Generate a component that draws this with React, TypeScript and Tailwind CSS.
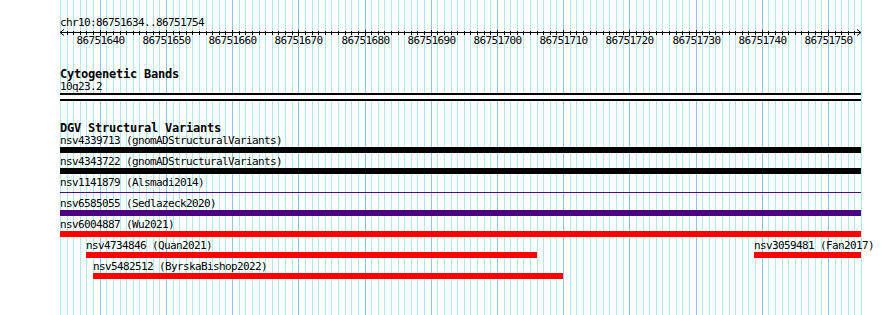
const START = 86751634;
const END = 86751754;
const LEFT = 60;
const PX = 801 / 121;

const xOf = (bp: number) => LEFT + (bp - START) * PX;

type Feature = { name: string; start: number; end: number; color: string; thin?: boolean };

// rows of the DGV track, each row may hold more than one feature
const rows: Feature[][] = [
  [{ name: 'nsv4339713 (gnomADStructuralVariants)', start: START, end: END + 1, color: '#000000' }],
  [{ name: 'nsv4343722 (gnomADStructuralVariants)', start: START, end: END + 1, color: '#000000' }],
  [{ name: 'nsv1141879 (Alsmadi2014)', start: START, end: END + 1, color: '#4b0082', thin: true }],
  [{ name: 'nsv6585055 (Sedlazeck2020)', start: START, end: END + 1, color: '#4b0082' }],
  [{ name: 'nsv6004887 (Wu2021)', start: START, end: END + 1, color: '#ff0000' }],
  [
    { name: 'nsv4734846 (Quan2021)', start: 86751638, end: 86751706, color: '#ff0000' },
    { name: 'nsv3059481 (Fan2017)', start: 86751738.85, end: END + 1, color: '#ff0000' },
  ],
  [{ name: 'nsv5482512 (ByrskaBishop2022)', start: 86751639, end: 86751710, color: '#ff0000' }],
];

const bases = Array.from({ length: END - START + 2 }, (_, i) => START + i);
const majors = bases.filter((b) => b % 10 === 0 && b <= END);

function Grid() {
  return (
    <svg className="absolute inset-0" width={890} height={315} shapeRendering="crispEdges">
      {bases.map((b) => (
        <line
          key={b}
          x1={Math.round(xOf(b)) + 0.5}
          x2={Math.round(xOf(b)) + 0.5}
          y1={0}
          y2={315}
          stroke={b % 10 === 0 ? '#8cc6ec' : '#b0eaf0'}
          strokeWidth={1}
        />
      ))}
    </svg>
  );
}

function Ruler() {
  const y = 3.5;
  const right = Math.round(xOf(END + 1));
  return (
    <svg className="block overflow-visible" width={890} height={5} shapeRendering="crispEdges">
      <line x1={LEFT} x2={right} y1={y} y2={y} stroke="#000" />
      <path d={`M${LEFT + 4} ${y - 3} L${LEFT} ${y} L${LEFT + 4} ${y + 3}`} stroke="#000" fill="none" shapeRendering="auto" />
      <path d={`M${right - 4} ${y - 3} L${right} ${y} L${right - 4} ${y + 3}`} stroke="#000" fill="none" shapeRendering="auto" />
      {bases.slice(1, -1).map((b) => {
        const x = Math.round(xOf(b)) + 0.5;
        const major = b % 10 === 0;
        return <line key={b} x1={x} x2={x} y1={major ? y - 3 : y - 2} y2={major ? y + 3 : y + 2} stroke="#000" />;
      })}
    </svg>
  );
}

export default function App() {
  return (
    <div className="relative h-[315px] w-[890px] overflow-hidden bg-white text-black [font-family:'DejaVu_Sans_Mono',monospace]">
      <Grid />
      <div className="relative pt-[16px] text-[11px] leading-[13px] tracking-[-0.62px]">
        {/* Overview header */}
        <div className="h-[13px] pl-[60px]">chr10:86751634..86751754</div>
        <Ruler />
        <div className="relative h-[13px]">
          {majors.map((b) => (
            <span key={b} className="absolute top-0 -translate-x-1/2" style={{ left: Math.round(xOf(b)) + 0.5 }}>
              {b}
            </span>
          ))}
        </div>

        {/* Cytogenetic bands */}
        <div className="mt-[21px] h-[12px] pl-[60px] text-[12px] font-bold tracking-[-0.22px]">Cytogenetic Bands</div>
        <div className="h-[13px] pl-[60px]">10q23.2</div>
        <div className="ml-[60px] h-[8px] w-[801px] border-y-2 border-black bg-white" />

        {/* DGV */}
        <div className="mt-[21px] h-[12px] pl-[60px] text-[12px] font-bold tracking-[-0.22px]">DGV Structural Variants</div>
        {rows.map((row, i) => (
          <div key={i} className="relative h-[21px]">
            {row.map((f) => {
              const left = Math.round(xOf(f.start));
              const width = Math.min(Math.round(xOf(f.end)), 862) - left;
              return (
                <div key={f.name} className="absolute top-0" style={{ left, width }}>
                  <div className="h-[13px] whitespace-nowrap">{f.name}</div>
                  <div className="flex h-[6px] items-center">
                    <div className={f.thin ? 'h-px w-full' : 'h-[6px] w-full'} style={{ backgroundColor: f.color }} />
                  </div>
                </div>
              );
            })}
          </div>
        ))}
      </div>
    </div>
  );
}
